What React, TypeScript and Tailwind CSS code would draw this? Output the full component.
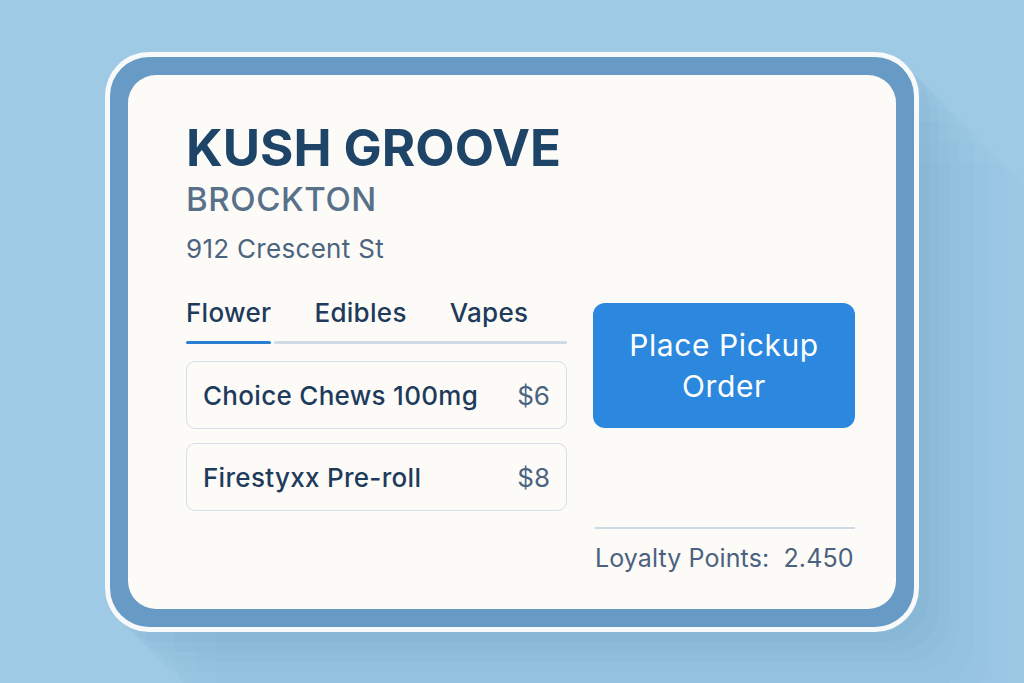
import React from 'react';

const ITEMS = [
  { name: 'Choice Chews 100mg', price: '$6' },
  { name: 'Firestyxx Pre-roll', price: '$8' },
];

const TABS = ['Flower', 'Edibles', 'Vapes'];

export default function App() {
  return (
    <div className="flex h-[683px] w-[1024px] justify-center overflow-hidden bg-[#9ecae5] pt-[52px] font-['Inter',sans-serif]">
      <div className="h-[580px] w-[814px] rounded-[44px] bg-[#f7f9fb] p-[5px] shadow-[10px_10px_0_rgba(60,110,160,0.03),20px_20px_0_rgba(60,110,160,0.03),30px_30px_0_rgba(60,110,160,0.025),40px_40px_0_rgba(60,110,160,0.025),55px_55px_0_rgba(60,110,160,0.02),70px_70px_0_rgba(60,110,160,0.02),90px_90px_0_rgba(60,110,160,0.015),110px_110px_0_rgba(60,110,160,0.015)]">
        <div className="h-full rounded-[39px] bg-[#679bc6] p-[18px]">
          <div className="h-full rounded-[28px] bg-[#fdfbf8] pl-[58px] pr-[40px] pt-[47px]">
            <h1 className="text-[51px] font-bold leading-none text-[#1e4468]">KUSH GROOVE</h1>
            <p className="mt-[10px] text-[33px] font-medium leading-none tracking-[0.6px] text-[#587089]">BROCKTON</p>
            <p className="mt-[20px] text-[26px] leading-none tracking-[0.3px] text-[#4b6480]">912 Crescent St</p>

            <div className="mt-[38px] flex items-start gap-[26px]">
              <div className="w-[381px]">
                <div className="flex gap-[43px] pb-[15px] text-[26px] font-medium leading-none tracking-[0.3px] text-[#1e3b5c]">
                  {TABS.map((t) => (
                    <span key={t}>{t}</span>
                  ))}
                </div>
                <div className="flex gap-[3px]">
                  <div className="h-[3px] w-[85px] rounded-full bg-[#2a7fd4]" />
                  <div className="h-[3px] flex-1 rounded-full bg-[#d0dae4]" />
                </div>
                <div className="mt-[17px] flex flex-col gap-[14px]">
                  {ITEMS.map((it) => (
                    <div
                      key={it.name}
                      className="flex h-[68px] items-center justify-between rounded-[9px] border border-[#d6dee8] bg-[#fdfbf8] pl-[16px] pr-[16px]"
                    >
                      <span className="text-[26px] font-medium tracking-[0.3px] text-[#1e3b5c]">{it.name}</span>
                      <span className="text-[26px] text-[#4a6482]">{it.price}</span>
                    </div>
                  ))}
                </div>
              </div>

              <div className="flex w-[262px] flex-col">
                <button className="mt-[3px] flex h-[125px] flex-col items-center justify-center rounded-[12px] bg-[#2b88de] text-[30px] leading-[41px] tracking-[0.6px] text-white">
                  <span>Place Pickup</span>
                  <span>Order</span>
                </button>
                <div className="ml-[2px] mt-[99px] h-[2px] bg-[#cddbe8]" />
                <p className="ml-[2px] mt-[17px] whitespace-pre text-[25px] leading-none tracking-[0.1px] text-[#4a6280]">
                  {'Loyalty Points:  2.450'}
                </p>
              </div>
            </div>
          </div>
        </div>
      </div>
    </div>
  );
}
